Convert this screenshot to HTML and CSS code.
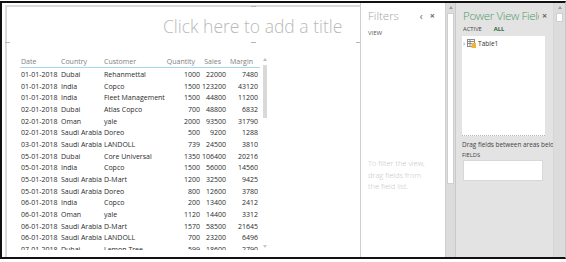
FILE: index.html
```html
<!DOCTYPE html>
<html lang="en">
<head>
  <meta charset="UTF-8" />
  <meta name="viewport" content="width=device-width, initial-scale=1.0" />
  <title>Power View</title>
  <link rel="stylesheet" href="styles.css">
</head>
<body>
  <div class="frame">
    <div class="canvas">
      <span class="tick tick-top"></span>
      <span class="tick tick-bottom"></span>
      <span class="tick tick-left"></span>
      <span class="tick tick-right"></span>

      <div class="title">Click here to add a title</div>

      <div class="table-area">
        <div class="grid">
          <div class="row head">
            <span>Date</span><span>Country</span><span>Customer</span>
            <span class="num">Quantity</span><span class="num">Sales</span><span class="num">Margin</span>
          </div>
          <div class="rows">
            <div class="row"><span>01-01-2018</span><span>Dubai</span><span>Rehanmettal</span><span class="num">1000</span><span class="num">22000</span><span class="num">7480</span></div>
            <div class="row"><span>01-01-2018</span><span>India</span><span>Copco</span><span class="num">1500</span><span class="num">123200</span><span class="num">43120</span></div>
            <div class="row"><span>01-01-2018</span><span>India</span><span>Fleet Management</span><span class="num">1500</span><span class="num">44800</span><span class="num">11200</span></div>
            <div class="row"><span>02-01-2018</span><span>Dubai</span><span>Atlas Copco</span><span class="num">700</span><span class="num">48800</span><span class="num">6832</span></div>
            <div class="row"><span>02-01-2018</span><span>Oman</span><span>yale</span><span class="num">2000</span><span class="num">93500</span><span class="num">31790</span></div>
            <div class="row"><span>02-01-2018</span><span>Saudi Arabia</span><span>Doreo</span><span class="num">500</span><span class="num">9200</span><span class="num">1288</span></div>
            <div class="row"><span>03-01-2018</span><span>Saudi Arabia</span><span>LANDOLL</span><span class="num">739</span><span class="num">24500</span><span class="num">3810</span></div>
            <div class="row"><span>05-01-2018</span><span>Dubai</span><span>Core Universal</span><span class="num">1350</span><span class="num">106400</span><span class="num">20216</span></div>
            <div class="row"><span>05-01-2018</span><span>India</span><span>Copco</span><span class="num">1500</span><span class="num">56000</span><span class="num">14560</span></div>
            <div class="row"><span>05-01-2018</span><span>Saudi Arabia</span><span>D-Mart</span><span class="num">1200</span><span class="num">32500</span><span class="num">9425</span></div>
            <div class="row"><span>05-01-2018</span><span>Saudi Arabia</span><span>Doreo</span><span class="num">800</span><span class="num">12600</span><span class="num">3780</span></div>
            <div class="row"><span>06-01-2018</span><span>India</span><span>Copco</span><span class="num">200</span><span class="num">13400</span><span class="num">2412</span></div>
            <div class="row"><span>06-01-2018</span><span>Oman</span><span>yale</span><span class="num">1120</span><span class="num">14400</span><span class="num">3312</span></div>
            <div class="row"><span>06-01-2018</span><span>Saudi Arabia</span><span>D-Mart</span><span class="num">1570</span><span class="num">58500</span><span class="num">21645</span></div>
            <div class="row"><span>06-01-2018</span><span>Saudi Arabia</span><span>LANDOLL</span><span class="num">700</span><span class="num">23200</span><span class="num">6496</span></div>
            <div class="row"><span>07-01-2018</span><span>Dubai</span><span>Lemon Tree</span><span class="num">599</span><span class="num">18600</span><span class="num">2790</span></div>
          </div>
        </div>
        <div class="tscroll">
          <span class="arrow-up"></span>
          <span class="tthumb"></span>
          <span class="arrow-down"></span>
        </div>
      </div>
    </div>

    <div class="filters">
      <div class="pane-head">
        <span class="pane-title">Filters</span>
        <span class="pane-btn">&lsaquo;</span>
        <span class="pane-btn close">&times;</span>
      </div>
      <div class="view">VIEW</div>
      <div class="hint">To filter the view,<br>drag fields from<br>the field list.</div>
    </div>

    <div class="vscroll mid">
      <span class="arrow-up"></span>
      <span class="thumb"></span>
    </div>

    <div class="fields">
      <div class="fields-head">
        <span class="fields-title">Power View Fields</span>
        <span class="fields-close">&times;</span>
      </div>
      <div class="tabs">
        <span>ACTIVE</span>
        <span class="active">ALL</span>
      </div>
      <div class="field-list">
        <div class="tree-item">
          <span class="caret">&rsaquo;</span>
          <svg class="table-icon" width="9" height="9" viewBox="0 0 9 9">
            <rect x="0.5" y="0.5" width="7" height="7" fill="#fff" stroke="#8c8c8c" />
            <path d="M0.5 2.5h7M0.5 4.5h7M3 0.5v7" stroke="#8c8c8c" />
            <rect x="4.5" y="4" width="4.5" height="5" fill="#f1b43c" />
          </svg>
          <span>Table1</span>
        </div>
      </div>
      <div class="drag-note">Drag fields between areas below:</div>
      <div class="area-label">FIELDS</div>
      <div class="area-box"></div>
    </div>

    <div class="vscroll edge">
      <span class="arrow-up"></span>
      <span class="thumb"></span>
    </div>
  </div>
</body>
</html>
```

FILE: styles.css
```css
:root {
  --ink: #2b2b2b;
  --muted: #808080;
  --pale: #b9b9b9;
  --panel: #e3e3e3;
  --track: #dcdcdc;
  --line: #cfcfcf;
  --green: #4f9a6a;
}

body {
  margin: 0;
  background: #fff;
  font-family: "Open Sans", "Noto Sans", sans-serif;
  color: var(--ink);
}

.frame {
  display: flex;
  height: 254px;
  margin-top: 1px;
  border: 2px solid #111;
  border-right: 1px solid #c8c8c8;
  overflow: hidden;
}

/* report canvas */
.canvas {
  position: relative;
  flex: 0 0 355px;
  box-sizing: border-box;
  margin: 2px 0 0 3px;
  border-top: 2px solid #dadada;
  border-left: 2px solid #dadada;
  background: #fff;
}

.tick {
  position: absolute;
  height: 1px;
  width: 5px;
  background: #b5b5b5;
}
.tick-top    { top: -1px; left: 244px; }
.tick-bottom { top: 35px; left: 244px; }
.tick-left   { top: 35px; left: -2px; }
.tick-right  { top: 35px; left: 349px; width: 4px; }

.title {
  margin-top: 7px;
  padding-left: 156px;
  font-size: 17.5px;
  font-weight: 300;
  line-height: 24px;
  color: var(--pale);
  white-space: nowrap;
}

.table-area {
  display: flex;
  margin-top: 19px;
  padding-left: 13px;
  height: 193px;
  overflow: hidden;
}

.grid {
  width: 240px;
}

.row {
  display: grid;
  grid-template-columns: 41px 43px 61px 35px 26px 32px;
  height: 11.67px;
  font-size: 7px;
  line-height: 11.67px;
  white-space: nowrap;
}

.row span:first-child {
  padding-left: 1px;
}

.row .num {
  text-align: right;
}

.row.head {
  height: 10px;
  line-height: 10px;
  color: var(--muted);
  border-bottom: 1px solid #a4d6f3;
}

.row.head .num {
  padding-right: 5px;
}

.rows {
  margin-top: 1px;
}

.tscroll {
  display: flex;
  flex-direction: column;
  align-items: center;
  width: 5px;
  margin-left: 2px;
}

.tthumb {
  width: 4px;
  height: 53px;
  margin-top: 4px;
  background: #d9d9d9;
}

.arrow-up,
.arrow-down {
  width: 0;
  height: 0;
  border-left: 2px solid transparent;
  border-right: 2px solid transparent;
}
.arrow-up {
  margin-top: 1px;
  border-bottom: 3px solid #bdbdbd;
}
.arrow-down {
  margin-top: auto;
  margin-bottom: 2px;
  border-top: 3px solid #c8c8c8;
}

/* filters pane */
.filters {
  flex: 0 0 86px;
  box-sizing: border-box;
  padding: 5px 0 0 7px;
  border-left: 1px solid var(--line);
  border-right: 1px solid var(--line);
  background: #fff;
}

.pane-head {
  display: flex;
  align-items: center;
  height: 15px;
}

.pane-title {
  font-size: 11.5px;
  font-weight: 300;
  color: #a3a3a3;
  margin-right: auto;
}

.pane-btn {
  font-size: 10px;
  color: #6a6a6a;
  line-height: 10px;
}

.pane-btn.close {
  margin: 0 10px 0 7px;
  font-weight: bold;
  font-size: 9px;
}

.view {
  margin-top: 6px;
  font-size: 6px;
  line-height: 8px;
  color: #555;
}

.hint {
  margin-top: 121px;
  font-size: 7.5px;
  font-weight: 300;
  line-height: 11.7px;
  color: #c3c3c3;
}

/* scrollbars */
.vscroll {
  display: flex;
  flex-direction: column;
  align-items: center;
  background: var(--track);
}

.vscroll .arrow-up {
  margin-top: 3px;
  border-bottom-color: #9a9a9a;
}

.vscroll .thumb {
  width: 5px;
  background: #fff;
  border: 1px solid #cfcfcf;
}

.vscroll.mid {
  flex: 0 0 10px;
  box-sizing: border-box;
  border-right: 1px solid #c9c9c9;
}
.vscroll.mid .thumb {
  height: 169px;
  margin-top: 4px;
}

.vscroll.edge {
  flex: 1;
  border-left: 1px solid #d6d6d6;
}
.vscroll.edge .thumb {
  height: 7px;
  margin-top: 4px;
}

/* field list */
.fields {
  flex: 0 0 97px;
  box-sizing: border-box;
  padding: 3px 0 0 6px;
  background: var(--panel);
  overflow: hidden;
}

.fields-head {
  display: flex;
  align-items: center;
  height: 14px;
  margin-top: 2px;
}

.fields-title {
  flex: 0 0 76px;
  padding-left: 1px;
  overflow: hidden;
  white-space: nowrap;
  font-size: 11.5px;
  font-weight: 300;
  letter-spacing: -0.35px;
  color: var(--green);
}

.fields-close {
  margin-left: 3px;
  font-size: 9px;
  font-weight: bold;
  color: #666;
}

.tabs {
  display: flex;
  gap: 12px;
  margin-top: 3px;
  padding-left: 1px;
  font-size: 5.8px;
  line-height: 8px;
  color: #444;
}

.tabs .active {
  font-weight: bold;
  color: #2f6a41;
}

.field-list {
  width: 83px;
  height: 100px;
  box-sizing: border-box;
  margin-top: 3px;
  background: #fff;
  border-bottom: 1px dotted #b4b4b4;
}

.tree-item {
  display: flex;
  align-items: center;
  gap: 1px;
  padding: 3px 0 0 1px;
  font-size: 6.5px;
  line-height: 9px;
  color: #333;
}

.caret {
  font-size: 7px;
  color: #777;
  margin-right: 1px;
}

.table-icon {
  margin-right: 1px;
}

.drag-note {
  margin-top: 4px;
  font-size: 6.4px;
  line-height: 9px;
  color: #444;
  white-space: nowrap;
}

.area-label {
  margin-top: 2px;
  font-size: 5.8px;
  line-height: 9px;
  color: #444;
}

.area-box {
  width: 80px;
  height: 21px;
  margin-left: 1px;
  background: #fff;
  border: 1px solid #d8d8d8;
  box-sizing: border-box;
}
```
